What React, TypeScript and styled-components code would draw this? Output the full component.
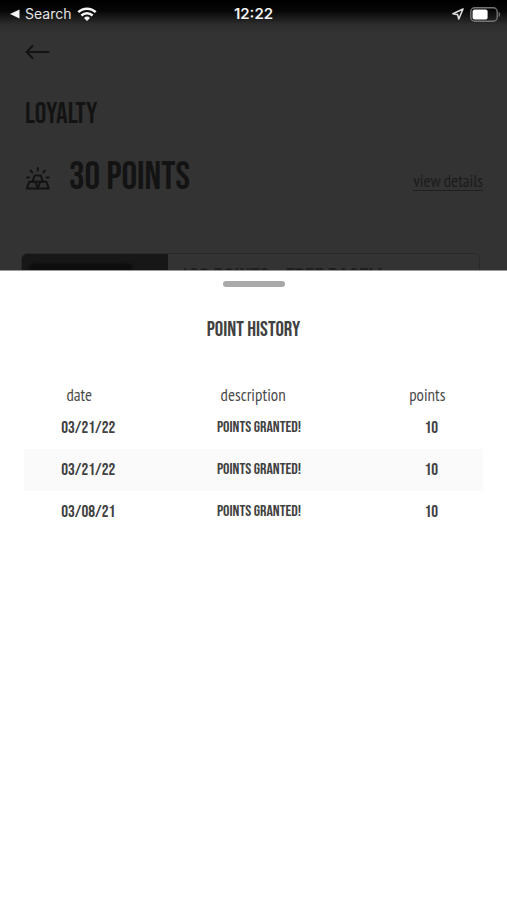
import React from "react";
import styled, { createGlobalStyle } from "styled-components";

const GlobalStyle = createGlobalStyle`
  * { box-sizing: border-box; }
  body { margin: 0; background: #333333; }
`;

const displayFont = `"Bebas Neue", "Roboto Condensed", "Liberation Sans", sans-serif`;
const bodyFont = `"PT Sans Narrow", "Open Sans Condensed", "Noto Sans", sans-serif`;

const Screen = styled.div`
  height: 100vh;
  overflow: hidden;
  color: #131313;
  background: linear-gradient(#000000 0, #050505 10px, #2e2e2e 25px, #333333 34px);
`;

const StatusBar = styled.header`
  display: grid;
  grid-template-columns: 1fr auto 1fr;
  align-items: center;
  height: 28px;
  padding: 0 6px;
  color: #f2f2f2;
  font: 14px/20px Inter, sans-serif;
`;

const StatusGroup = styled.div<{ $end?: boolean }>`
  display: flex;
  align-items: center;
  justify-content: ${(p) => (p.$end ? "flex-end" : "flex-start")};
  gap: 6px;
  padding-left: 4px;
`;

const ReturnButton = styled.button`
  display: flex;
  align-items: center;
  gap: 5px;
  padding: 0;
  border: 0;
  background: none;
  color: #e4e4e4;
  font: inherit;
`;

const Clock = styled.time`
  font-size: 15px;
  font-weight: 600;
`;

const Page = styled.main`
  padding: 14px 24px 0 25px;
`;

const BackButton = styled.button`
  display: block;
  height: 20px;
  padding: 0;
  border: 0;
  background: none;
  color: inherit;
`;

const Title = styled.h1`
  margin: 37px 0 0;
  font: 400 29px/32px ${displayFont};
`;

const Summary = styled.div`
  display: flex;
  align-items: center;
  gap: 18px;
  margin-top: 27px;
`;

const Balance = styled.strong`
  flex: 1;
  font: 400 39px/40px ${displayFont};
`;

const DetailsLink = styled.a`
  margin-top: 6px;
  border-bottom: 1px solid #202020;
  color: #1b1b1b;
  font: 17px/18px ${bodyFont};
  text-decoration: none;
`;

const Reward = styled.article`
  display: flex;
  height: 120px;
  margin: 55px 3px 0 -4px;
  border: 1px solid #292929;
  border-radius: 6px;
  overflow: hidden;
`;

const RewardImage = styled.div`
  width: 32%;
  padding: 10px 36px 8px 8px;
  background: #171717;

  &::before {
    content: "";
    display: block;
    height: 100%;
    border-radius: 4px;
    background: #0e0e0e;
    box-shadow: 0 0 3px #0e0e0e;
  }
`;

const RewardName = styled.h3`
  margin: 10px;
  color: #1f1f1f;
  font: 400 26px/32px ${displayFont};
`;

const Sheet = styled.section`
  position: fixed;
  right: 0;
  bottom: 0;
  left: 0;
  height: 70vh;
  padding: 10px 24px;
  border-top: 1px solid #999999;
  background: #ffffff;
  color: #414141;
`;

const Handle = styled.div`
  width: 62px;
  height: 6px;
  margin: 0 auto;
  border-radius: 3px;
  background: #a9a9a9;
`;

const SheetTitle = styled.h2`
  margin: 31px 0 0;
  text-align: center;
  font: 400 21px/24px ${displayFont};
`;

const HistoryTable = styled.table`
  width: 100%;
  margin-top: 41px;
  border-collapse: collapse;
  table-layout: fixed;
`;

const HeadCell = styled.th<{ $width: number; $before?: number; $after?: number }>`
  width: ${(p) => p.$width}%;
  padding: 0 ${(p) => p.$after ?? 0}px 0 ${(p) => p.$before ?? 0}px;
  color: #4c4c4c;
  font: 17px/24px ${bodyFont};
`;

const Row = styled.tr`
  &:nth-child(even) {
    background: #fafafa;
  }
`;

const Cell = styled.td<{ $size?: number; $before?: number }>`
  height: 42px;
  padding: 0 0 0 ${(p) => p.$before ?? 0}px;
  text-align: center;
  font: 400 ${(p) => p.$size ?? 17}px/20px ${displayFont};
`;

const history = [
  { date: "03/21/22", description: "POINTS GRANTED!", points: 10 },
  { date: "03/21/22", description: "POINTS GRANTED!", points: 10 },
  { date: "03/08/21", description: "POINTS GRANTED!", points: 10 },
];

const ReturnIcon = () => (
  <svg width="10" height="10" viewBox="0 0 10 10" fill="#f5f5f5" aria-hidden="true">
    <path d="M0 5 L9.5 0.5 V9.5 Z" />
  </svg>
);

const WifiIcon = () => (
  <svg width="20" height="15" viewBox="0 0 20 15" fill="none" stroke="#f5f5f5" strokeWidth="2.5" aria-label="Wi-Fi">
    <path d="M1.3 5.2 A12.4 12.4 0 0 1 18.7 5.2" />
    <path d="M4.4 8.5 A8 8 0 0 1 15.6 8.5" />
    <path d="M7 10.9 A4.4 4.4 0 0 1 13 10.9 L10 14 Z" fill="#f5f5f5" stroke="none" />
  </svg>
);

const LocationIcon = () => (
  <svg width="12" height="12" viewBox="0 0 12 12" fill="none" stroke="#dddddd" strokeWidth="1.6" strokeLinejoin="round" aria-label="Location in use">
    <path d="M11 1 L1 5.8 L5.6 6.6 L6.8 11 Z" />
  </svg>
);

const BatteryIcon = () => (
  <svg width="31" height="15" viewBox="0 0 31 15" aria-label="Battery">
    <rect x="0.8" y="0.8" width="26.4" height="13.4" rx="4" fill="none" stroke="#747474" strokeWidth="1.4" />
    <rect x="2.6" y="2.6" width="15" height="9.8" rx="2" fill="#ffffff" />
    <path d="M28.6 5 C30.6 5.6 30.6 9.4 28.6 10 Z" fill="#747474" />
  </svg>
);

const BackIcon = () => (
  <svg width="25" height="18" viewBox="0 0 25 18" fill="none" stroke="currentColor" strokeWidth="2" strokeLinecap="round" strokeLinejoin="round" aria-hidden="true">
    <path d="M23.5 10 H2 M7.5 4 L1.6 10 L7.5 16" />
  </svg>
);

const GoldIcon = () => (
  <svg width="26" height="26" viewBox="0 0 26 26" fill="none" stroke="currentColor" strokeWidth="2" strokeLinecap="round" strokeLinejoin="round" aria-hidden="true">
    <path d="M9.6 10.4 H15.8 L18 16.8 H7.4 Z" />
    <path d="M4.2 16.8 H10.4 L12.8 23.4 H1.8 Z" />
    <path d="M15.2 16.8 H21.4 L23.8 23.4 H12.8 Z" />
    <path d="M12.8 3 V5.4 M5.6 5.6 L7.2 7.4 M20 5.6 L18.4 7.4 M2 12.6 H4 M21.6 12.6 H23.6" />
  </svg>
);

export default function App() {
  return (
    <Screen>
      <GlobalStyle />
      <StatusBar>
        <StatusGroup>
          <ReturnButton>
            <ReturnIcon />
            Search
          </ReturnButton>
          <WifiIcon />
        </StatusGroup>
        <Clock>12:22</Clock>
        <StatusGroup $end>
          <LocationIcon />
          <BatteryIcon />
        </StatusGroup>
      </StatusBar>
      <Page>
        <BackButton aria-label="Back">
          <BackIcon />
        </BackButton>
        <Title>LOYALTY</Title>
        <Summary>
          <GoldIcon />
          <Balance>30 POINTS</Balance>
          <DetailsLink href="#details">view details</DetailsLink>
        </Summary>
        <Reward>
          <RewardImage />
          <RewardName>100 POINTS – FREE BAGEL!</RewardName>
        </Reward>
      </Page>
      <Sheet role="dialog" aria-labelledby="history-title">
        <Handle />
        <SheetTitle id="history-title">POINT HISTORY</SheetTitle>
        <HistoryTable>
          <thead>
            <tr>
              <HeadCell $width={28} $after={18}>date</HeadCell>
              <HeadCell $width={46} $after={10}>description</HeadCell>
              <HeadCell $width={26} $before={8}>points</HeadCell>
            </tr>
          </thead>
          <tbody>
            {history.map((entry, index) => (
              <Row key={index}>
                <Cell>{entry.date}</Cell>
                <Cell $size={16} $before={2}>{entry.description}</Cell>
                <Cell $before={16}>{entry.points}</Cell>
              </Row>
            ))}
          </tbody>
        </HistoryTable>
      </Sheet>
    </Screen>
  );
}
